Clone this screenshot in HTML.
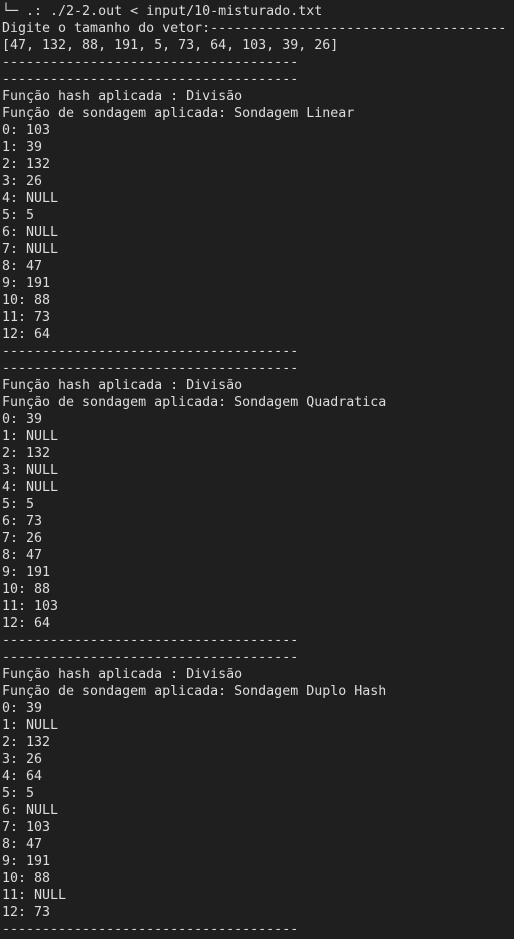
<!DOCTYPE html>
<html><head><meta charset="utf-8"><style>
html,body{margin:0;padding:0;background:#1f1f1f;width:514px;height:939px;overflow:hidden}
pre{margin:0;padding:3px 0 0 2px;font-family:"DejaVu Sans Mono","Liberation Mono",monospace;font-size:13.3px;line-height:17px;color:#dcdcdc;white-space:pre}
</style></head><body><pre>└─ .: ./2-2.out &lt; input/10-misturado.txt
Digite o tamanho do vetor:-------------------------------------
[47, 132, 88, 191, 5, 73, 64, 103, 39, 26]
-------------------------------------
-------------------------------------
Função hash aplicada : Divisão
Função de sondagem aplicada: Sondagem Linear
0: 103
1: 39
2: 132
3: 26
4: NULL
5: 5
6: NULL
7: NULL
8: 47
9: 191
10: 88
11: 73
12: 64
-------------------------------------
-------------------------------------
Função hash aplicada : Divisão
Função de sondagem aplicada: Sondagem Quadratica
0: 39
1: NULL
2: 132
3: NULL
4: NULL
5: 5
6: 73
7: 26
8: 47
9: 191
10: 88
11: 103
12: 64
-------------------------------------
-------------------------------------
Função hash aplicada : Divisão
Função de sondagem aplicada: Sondagem Duplo Hash
0: 39
1: NULL
2: 132
3: 26
4: 64
5: 5
6: NULL
7: 103
8: 47
9: 191
10: 88
11: NULL
12: 73
-------------------------------------</pre></body></html>
